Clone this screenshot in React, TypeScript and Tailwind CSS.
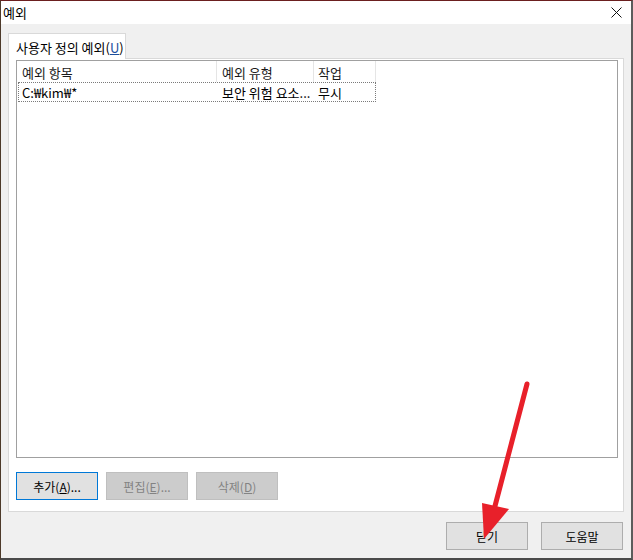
import React from "react";

const font = { fontFamily: '"Noto Sans CJK KR", "Noto Sans", sans-serif' };

function WinButton({
  label,
  mnemonic,
  suffix = "",
  disabled = false,
  focused = false,
}: {
  label: string;
  mnemonic?: string;
  suffix?: string;
  disabled?: boolean;
  focused?: boolean;
}) {
  const base = "flex h-[28px] w-[82px] items-center justify-center pt-[1px] text-[12px] leading-none";
  const look = disabled
    ? "bg-[#cccccc] border border-[#bfbfbf] text-[#838383]"
    : focused
    ? "bg-[#e1e1e1] border border-[#0078d7] text-black"
    : "bg-[#e1e1e1] border border-[#adadad] text-black";
  return (
    <div className={`${base} ${look}`}>
      {label}
      {mnemonic && (
        <>
          (<span className="underline">{mnemonic}</span>)
        </>
      )}
      {suffix}
    </div>
  );
}

export default function App() {
  return (
    <div
      className="relative flex h-[560px] w-[633px] flex-col overflow-hidden bg-[#f0f0f0] border-t border-[#6b1f1f] border-l border-l-[#4d3a2a] border-r-2 border-r-[#5c5c5c] border-b-2 border-b-[#4a4a4a]"
      style={font}
    >
      {/* title bar */}
      <div className="flex h-[23px] shrink-0 items-center justify-between bg-white pl-[2px] pr-[8px]">
        <span className="pt-[1px] text-[13px] text-black">예외</span>
        <svg width="11" height="11" viewBox="0 0 11 11" className="mr-[1px]">
          <path d="M0.5 0.5 L10.5 10.5 M10.5 0.5 L0.5 10.5" stroke="#111" strokeWidth="1" />
        </svg>
      </div>

      {/* body */}
      <div className="flex flex-1 flex-col pl-[7px] pr-[7px] pt-[9px]">
        {/* tab strip */}
        <div className="flex">
          <div className="relative z-10 -mb-px flex h-[26px] w-[118px] items-center border border-b-0 border-[#d9d9d9] bg-white pl-[7px] pt-[2px] text-[13px] text-black">
            사용자 정의 예외(<span className="text-[#1c4e9c] underline">U</span>)
          </div>
        </div>

        {/* tab panel */}
        <div className="flex h-[454px] flex-col border border-[#d9d9d9] bg-white pl-[7px] pr-[5px] pt-[1px]">
          {/* list view */}
          <div className="h-[398px] border border-[#a0a0a0] bg-white">
            <div className="flex h-[21px] text-[13px] text-[#1a1a1a]">
              <div className="flex w-[200px] items-center border-r border-[#e5e5e5] pl-[5px] pt-[2px]">예외 항목</div>
              <div className="flex w-[97px] items-center border-r border-[#e5e5e5] pl-[5px] pt-[2px]">예외 유형</div>
              <div className="flex w-[62px] items-center border-r border-[#e5e5e5] pl-[4px] pt-[2px]">작업</div>
            </div>
            <div className="ml-[1px] flex h-[20px] w-[358px] items-center border border-dotted border-[#7a7a7a] pt-[1px] text-[13px] text-black">
              <div className="w-[198px] pl-[3px]">C:₩kim₩*</div>
              <div className="w-[97px] pl-[5px]">보안 위험 요소...</div>
              <div className="pl-[4px]">무시</div>
            </div>
          </div>

          {/* action buttons */}
          <div className="mt-[14px] flex gap-[8px]">
            <WinButton label="추가" mnemonic="A" suffix="..." focused />
            <WinButton label="편집" mnemonic="E" suffix="..." disabled />
            <WinButton label="삭제" mnemonic="D" disabled />
          </div>
        </div>

        {/* dialog buttons */}
        <div className="mt-[10px] flex justify-end gap-[13px] pr-[1px]">
          <WinButton label="닫기" />
          <WinButton label="도움말" />
        </div>
      </div>

      {/* red annotation arrow */}
      <svg className="pointer-events-none absolute left-0 top-0" width="633" height="560">
        <line x1="526" y1="383" x2="494" y2="505" stroke="#e8202a" strokeWidth="5" strokeLinecap="round" />
        <polygon points="481,502 508,508 483,538" fill="#e8202a" />
      </svg>
    </div>
  );
}
